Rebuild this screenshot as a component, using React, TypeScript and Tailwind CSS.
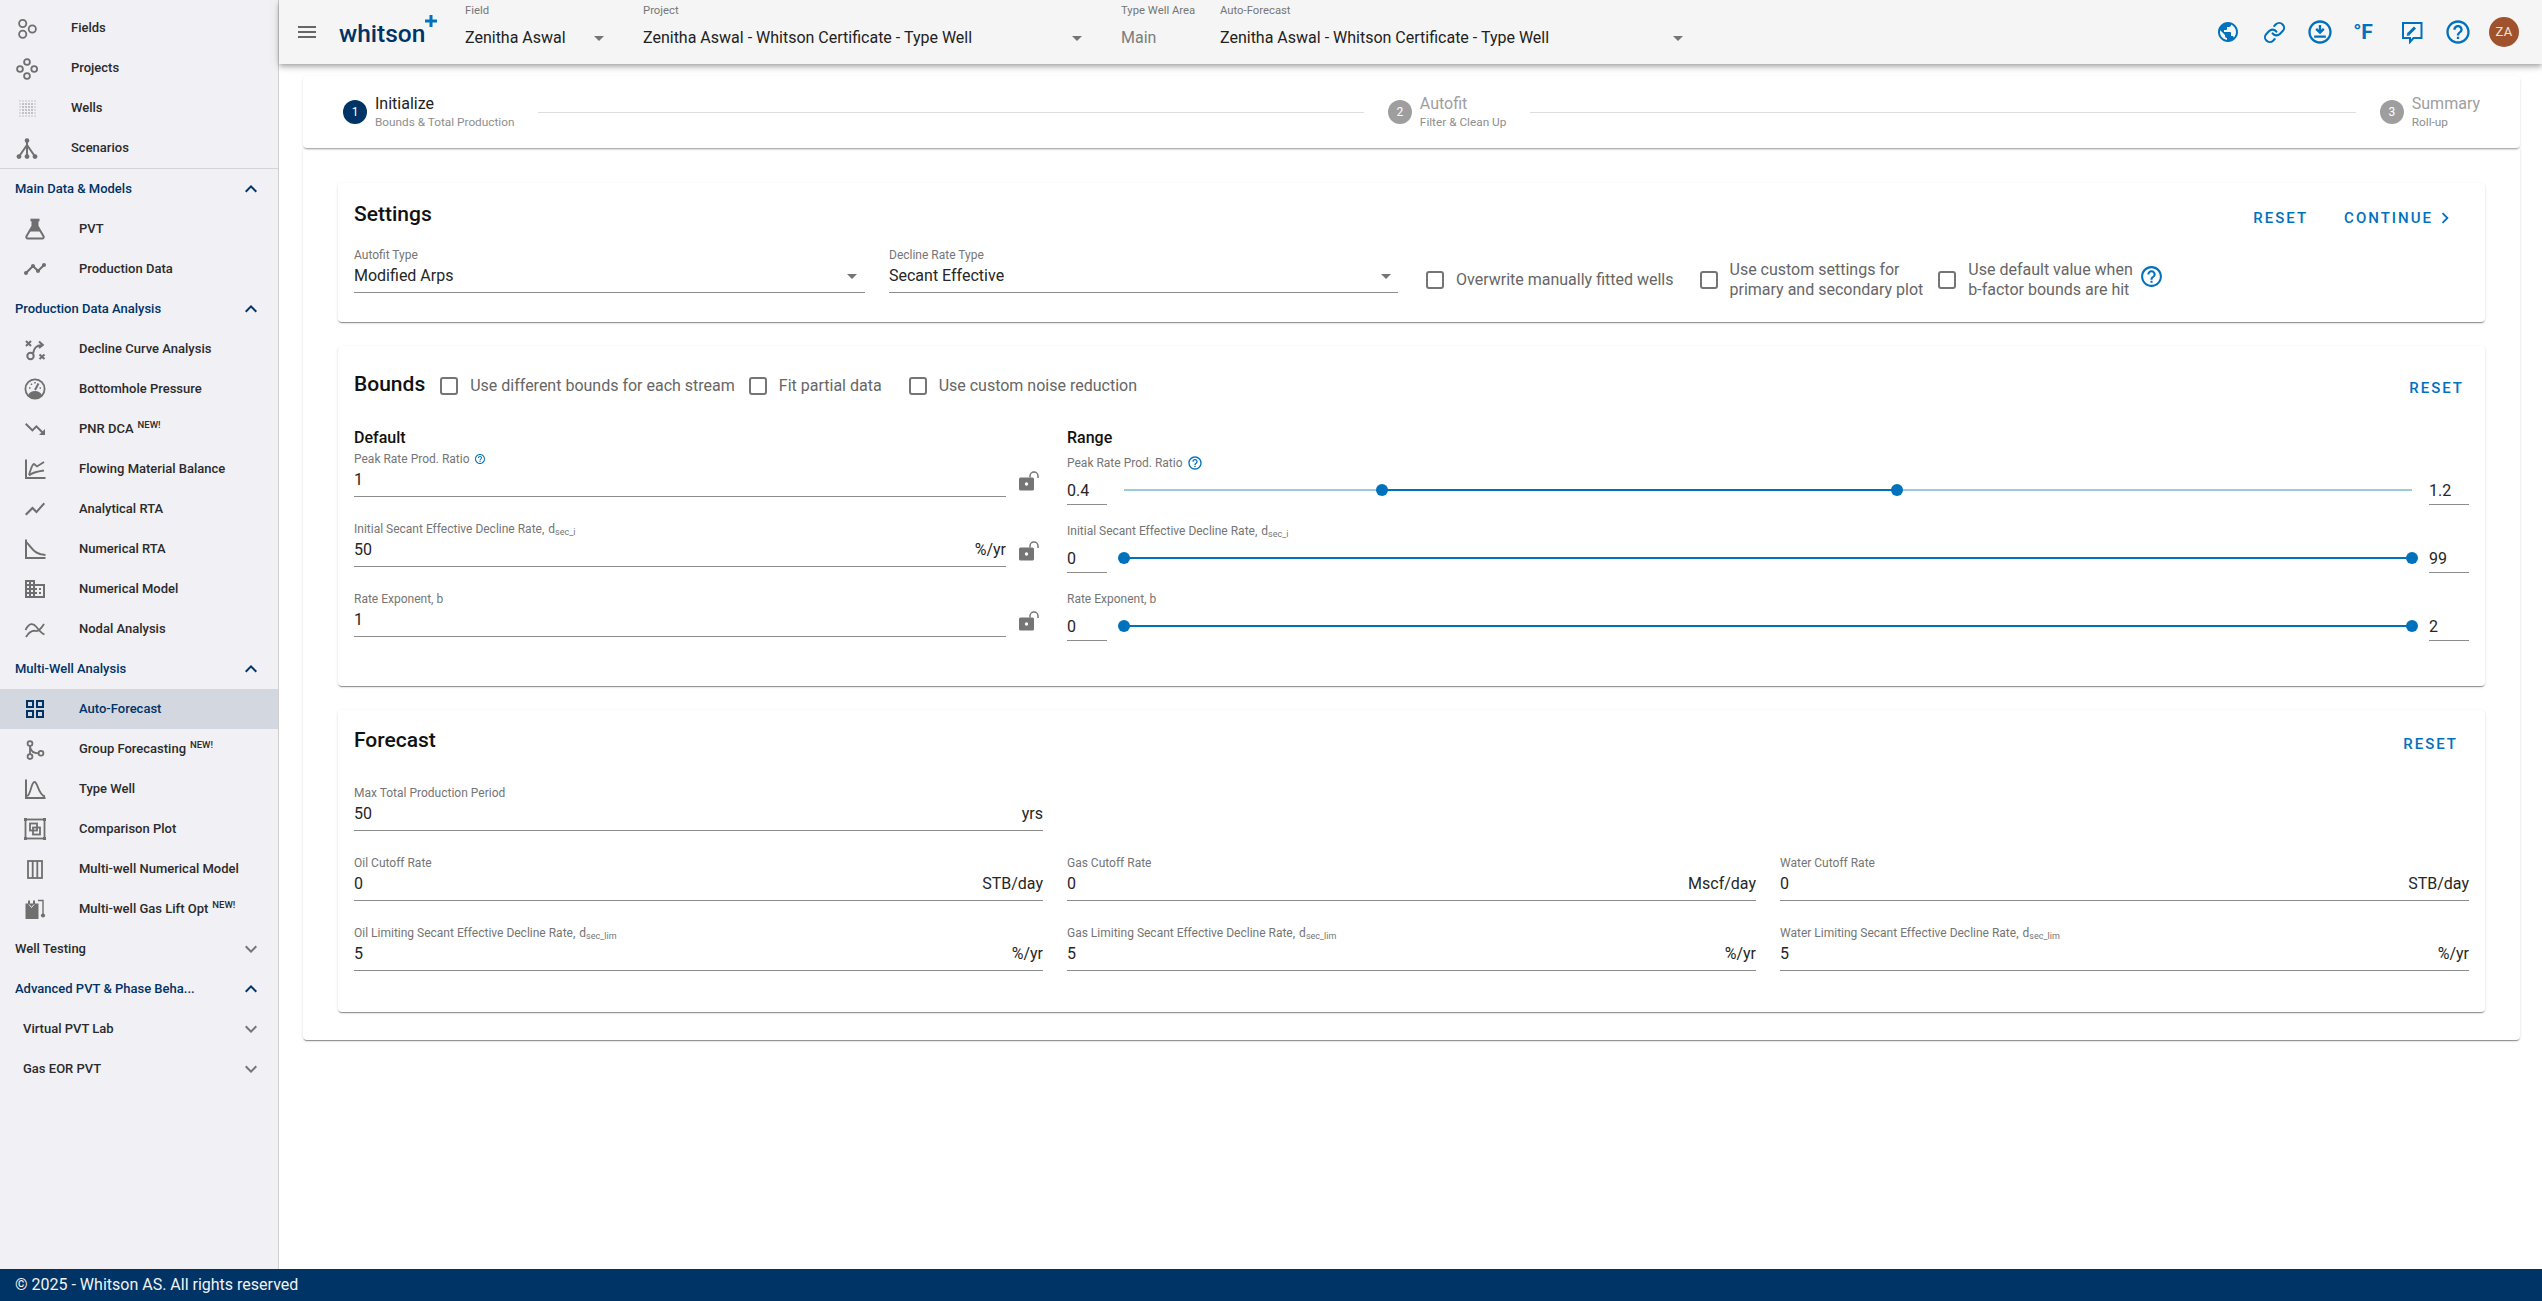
import React from "react";
import { Link as LinkIcon } from "lucide-react";
import {
  MdMenu, MdArrowDropDown, MdExpandLess, MdExpandMore, MdPublic, MdOutlineDownloadForOffline,
  MdHelpOutline, MdTimeline, MdTrendingDown, MdShowChart, MdDomain, MdOutlineGridView, MdChevronRight,
} from "react-icons/md";

const G = "#6f6f6f";
const Svg = ({ children }: { children: React.ReactNode }) => (
  <svg width="24" height="24" viewBox="0 0 24 24" fill="none" stroke={G} strokeWidth="1.8">{children}</svg>
);

const FieldsIcon = () => (
  <Svg><circle cx="7.7" cy="7.5" r="3.6" /><circle cx="7.7" cy="18.3" r="3.6" /><circle cx="17.3" cy="13" r="3.6" /></Svg>
);
const ProjectsIcon = () => (
  <Svg><circle cx="12" cy="6" r="2.9" /><circle cx="5" cy="13" r="2.9" /><circle cx="19.2" cy="13" r="2.9" /><circle cx="12" cy="20" r="2.9" /></Svg>
);
const WellsIcon = () => (
  <svg width="24" height="24" viewBox="0 0 24 24">
    {[0, 1, 2, 3, 4, 5].map((r) =>
      [0, 1, 2, 3, 4, 5].map((c) => (
        <rect key={`${r}-${c}`} x={5 + c * 3 - 0.5} y={5 + r * 3 - 0.5} width="1" height="1" fill="#333"
          opacity={r === 0 || r === 5 || c === 0 || c === 5 ? 0.45 : 0.95} />
      ))
    )}
  </svg>
);
const ScenariosIcon = () => (
  <Svg>
    <path d="M12 5V20M12 9L4 20.5M12 9L20 20.5" strokeWidth="2" />
    <circle cx="12" cy="4.6" r="2.3" fill={G} stroke="none" />
    <circle cx="4" cy="20.6" r="2.4" fill={G} stroke="none" />
    <circle cx="12" cy="20.6" r="2.4" fill={G} stroke="none" />
    <circle cx="20" cy="20.6" r="2.4" fill={G} stroke="none" />
  </Svg>
);
const FlaskIcon = () => (
  <Svg>
    <path d="M7.5 3H16.5" strokeWidth="2.6" />
    <path d="M9.5 3V9L3.5 19.2C2.9 20.4 3.5 21.5 4.8 21.5H19.2C20.5 21.5 21.1 20.4 20.5 19.2L14.5 9V3" strokeWidth="2" />
    <path d="M9.5 4H14.5V9.5L17.3 14.5H6.7L9.5 9.5Z" fill={G} stroke="none" />
  </Svg>
);
const DcaIcon = () => (
  <Svg>
    <path d="M3 4L8 9M8 4L3 9M16.5 17.5L21.5 22M21.5 17.5L16.5 22" strokeWidth="2" />
    <circle cx="7.5" cy="19" r="3.2" strokeWidth="2" />
    <path d="M10 16.5C11 11 13 8.5 19 8M16 4.5L19.8 8L16 11" strokeWidth="2" />
  </Svg>
);
const GaugeIcon = () => (
  <Svg>
    <circle cx="12" cy="12" r="9.6" />
    <path d="M5 18.2A9.3 9.3 0 0 0 19 18.2A8 8 0 0 0 5 18.2Z" fill={G} stroke="none" />
    <path d="M12 13L15.5 6.5" strokeWidth="2" />
    <path d="M6 11H7.5M8 6.8L9 7.8M12 5V6.5M18 11H16.5" strokeWidth="1.6" />
  </Svg>
);
const FmbIcon = () => (
  <Svg>
    <path d="M3 2.5V21H22.5" strokeWidth="2" />
    <path d="M6 18C8 12 9 7 11 7L14 9.5L21 5" strokeWidth="1.8" />
    <path d="M6 18.5C9 15.5 13 14.5 21 13.5" strokeWidth="1.8" />
  </Svg>
);
const RtaIcon = () => (
  <Svg><path d="M3 2.5V21H22.5" strokeWidth="2" /><path d="M3 5C9 10 11 18 22.5 18" strokeWidth="2" /></Svg>
);
const NodalIcon = () => (
  <Svg>
    <path d="M2.5 13C6 6 10 5.5 13.5 10C16 13.5 18 16 21.5 17.5" strokeWidth="1.8" />
    <path d="M3 20C6 15 9 13 13 14C16 14.5 18.5 11 21 7" strokeWidth="1.8" />
  </Svg>
);
const GroupIcon = () => (
  <Svg>
    <circle cx="7" cy="6.5" r="2.4" /><circle cx="7" cy="19.6" r="2.4" /><circle cx="18" cy="16.3" r="2.4" />
    <path d="M7 9V17M7 10C8 15 11 16.3 15.5 16.3" />
  </Svg>
);
const TypeWellIcon = () => (
  <Svg><path d="M3 2.5V21H22.5" strokeWidth="2" /><path d="M4 19C8 18 8 5 11.5 5C15 5 15 18 22 19.5" strokeWidth="1.8" /></Svg>
);
const CompareIcon = () => (
  <Svg>
    <rect x="2.5" y="2.5" width="19" height="19" />
    <rect x="1" y="1" width="3" height="3" fill={G} stroke="none" />
    <rect x="20" y="1" width="3" height="3" fill={G} stroke="none" />
    <rect x="1" y="20" width="3" height="3" fill={G} stroke="none" />
    <rect x="20" y="20" width="3" height="3" fill={G} stroke="none" />
    <rect x="7" y="6.5" width="7" height="7" /><rect x="10" y="10.5" width="7" height="7" />
  </Svg>
);
const ColumnsIcon = () => (
  <Svg><rect x="5" y="4" width="14" height="17" /><path d="M9.7 4V21M14.3 4V21" /></Svg>
);
const GasLiftIcon = () => (
  <svg width="24" height="24" viewBox="0 0 24 24">
    <path d="M2.5 6.5H5V3.5H7V6.5H10V3.5H12V6.5H15.5V22H2.5Z" fill={G} />
    <path d="M15 3.5H20V17" fill="none" stroke={G} strokeWidth="1.4" />
    <circle cx="20" cy="18.5" r="2.1" fill={G} />
    <path d="M6 7.5L8.5 10.5L11 7.5" fill="none" stroke="#f0f0f5" strokeWidth="1" />
  </svg>
);
const FeedbackIcon = () => (
  <svg width="24" height="24" viewBox="0 0 24 24" fill="none" stroke="#0071bc">
    <path d="M3 3H21.5V18H13.5L10 22V18H3Z" strokeWidth="2" />
    <path d="M8.5 14L15 7.5" strokeWidth="3" />
    <path d="M7 15.5L7.6 13L9.8 15Z" fill="#0071bc" strokeWidth="0.6" />
  </svg>
);

type Item =
  | { kind: "link"; label: string; icon: React.ReactNode; indent?: boolean; active?: boolean; isNew?: boolean }
  | { kind: "section"; label: string; open: boolean; sub?: boolean; dark?: boolean };

const icon = (I: React.ComponentType<{ size?: number; color?: string }>, color = G) => <I size={24} color={color} />;

const top: Item[] = [
  { kind: "link", label: "Fields", icon: <FieldsIcon /> },
  { kind: "link", label: "Projects", icon: <ProjectsIcon /> },
  { kind: "link", label: "Wells", icon: <WellsIcon /> },
  { kind: "link", label: "Scenarios", icon: <ScenariosIcon /> },
];
const rest: Item[] = [
  { kind: "section", label: "Main Data & Models", open: true },
  { kind: "link", indent: true, label: "PVT", icon: <FlaskIcon /> },
  { kind: "link", indent: true, label: "Production Data", icon: icon(MdTimeline) },
  { kind: "section", label: "Production Data Analysis", open: true },
  { kind: "link", indent: true, label: "Decline Curve Analysis", icon: <DcaIcon /> },
  { kind: "link", indent: true, label: "Bottomhole Pressure", icon: <GaugeIcon /> },
  { kind: "link", indent: true, label: "PNR DCA", icon: icon(MdTrendingDown), isNew: true },
  { kind: "link", indent: true, label: "Flowing Material Balance", icon: <FmbIcon /> },
  { kind: "link", indent: true, label: "Analytical RTA", icon: icon(MdShowChart) },
  { kind: "link", indent: true, label: "Numerical RTA", icon: <RtaIcon /> },
  { kind: "link", indent: true, label: "Numerical Model", icon: icon(MdDomain) },
  { kind: "link", indent: true, label: "Nodal Analysis", icon: <NodalIcon /> },
  { kind: "section", label: "Multi-Well Analysis", open: true },
  { kind: "link", indent: true, active: true, label: "Auto-Forecast", icon: icon(MdOutlineGridView, "#003366") },
  { kind: "link", indent: true, label: "Group Forecasting", icon: <GroupIcon />, isNew: true },
  { kind: "link", indent: true, label: "Type Well", icon: <TypeWellIcon /> },
  { kind: "link", indent: true, label: "Comparison Plot", icon: <CompareIcon /> },
  { kind: "link", indent: true, label: "Multi-well Numerical Model", icon: <ColumnsIcon /> },
  { kind: "link", indent: true, label: "Multi-well Gas Lift Opt", icon: <GasLiftIcon />, isNew: true },
  { kind: "section", label: "Well Testing", open: false, dark: true },
  { kind: "section", label: "Advanced PVT & Phase Beha...", open: true },
  { kind: "section", label: "Virtual PVT Lab", open: false, sub: true, dark: true },
  { kind: "section", label: "Gas EOR PVT", open: false, sub: true, dark: true },
];

function NavRow({ item }: { item: Item }) {
  if (item.kind === "section") {
    return (
      <div className={`flex h-10 items-center pr-[15px] text-[13px] font-medium ${item.sub ? "pl-[23px]" : "pl-[15px]"} ${item.dark ? "text-[#2b2b2b]" : "text-[#003366]"}`}>
        <span className="flex-1">{item.label}</span>
        {item.open ? <MdExpandLess size={24} color="#003366" /> : <MdExpandMore size={24} color="#757575" />}
      </div>
    );
  }
  return (
    <div className={`flex h-10 items-center gap-8 text-[13px] font-medium ${item.indent ? "pl-[23px]" : "pl-[15px]"} ${item.active ? "bg-[#d3d8e0] text-[#003366]" : "text-[#2b2b2b]"}`}>
      <span className="flex h-6 w-6 items-center justify-center">{item.icon}</span>
      <span>
        {item.label}
        {item.isNew && <span className="relative -top-[5px] ml-1 text-[9.5px]">NEW!</span>}
      </span>
    </div>
  );
}

function Sidebar() {
  return (
    <aside className="w-[279px] shrink-0 border-r border-[#cfcfcf] bg-[#f0f0f5] pt-2">
      <div className="h-[161px] border-b border-[#d4d4d4]">
        {top.map((i, n) => <NavRow key={n} item={i} />)}
      </div>
      {rest.map((i, n) => <NavRow key={n} item={i} />)}
    </aside>
  );
}

function HeaderSelect({ label, value, width, arrow = true, muted, className = "" }: { label: string; value: string; width: string; arrow?: boolean; muted?: boolean; className?: string }) {
  return (
    <div className={`${width} ${className} shrink-0 self-start pt-[3px]`}>
      <div className="h-4 text-[11.3px] leading-4 text-[#757575]">{label}</div>
      <div className={`mt-[3px] flex h-8 items-center justify-between text-[16px] ${muted ? "text-[#7c7c7c]" : "text-[#222]"}`}>
        <span className="whitespace-nowrap">{value}</span>
        {arrow && <MdArrowDropDown size={24} color="#757575" />}
      </div>
    </div>
  );
}

const BLUE = "#0071bc";

function Header() {
  return (
    <header className="relative z-10 flex h-16 shrink-0 items-center bg-[#f5f5f5] pl-4 pr-[23px] shadow-[0_2px_4px_-1px_rgba(0,0,0,0.2),0_4px_5px_0_rgba(0,0,0,0.14),0_1px_10px_0_rgba(0,0,0,0.12)]">
      <MdMenu size={24} color="#666" />
      <div className="relative ml-5 mt-1 w-[126px] text-[24.5px] font-medium leading-none text-[#003366]">
        whitson
        <svg className="absolute left-[86px] -top-[7px]" width="12" height="12" viewBox="0 0 12 12">
          <path d="M6 0V12M0 6H12" stroke={BLUE} strokeWidth="3" />
        </svg>
      </div>
      <HeaderSelect label="Field" value="Zenitha Aswal" width="w-[146px]" />
      <HeaderSelect label="Project" value="Zenitha Aswal - Whitson Certificate - Type Well" width="w-[446px]" className="ml-8" />
      <HeaderSelect label="Type Well Area" value="Main" width="w-[99px]" arrow={false} muted className="ml-8" />
      <HeaderSelect label="Auto-Forecast" value="Zenitha Aswal - Whitson Certificate - Type Well" width="w-[470px]" />
      <div className="ml-auto flex items-center">
        <span className="flex w-[46px] justify-center"><MdPublic size={24} color={BLUE} /></span>
        <span className="flex w-[46px] justify-center"><LinkIcon size={23} color={BLUE} strokeWidth={2.2} /></span>
        <span className="flex w-[46px] justify-center"><MdOutlineDownloadForOffline size={28} color={BLUE} /></span>
        <span className="flex w-[46px] justify-center pr-[6px] text-[21px] font-bold leading-none text-[#0071bc]">°F</span>
        <span className="flex w-[46px] justify-center"><FeedbackIcon /></span>
        <span className="flex w-[46px] justify-center"><MdHelpOutline size={28} color={BLUE} /></span>
        <span className="ml-[8px] flex h-[30px] w-[30px] items-center justify-center rounded-full bg-[#a0522d] text-[13px] tracking-wide text-[#f3e5de]">ZA</span>
      </div>
    </header>
  );
}

function Step({ n, title, sub, active }: { n: number; title: string; sub: string; active?: boolean }) {
  return (
    <div className="flex shrink-0 items-center gap-2">
      <span className={`flex h-6 w-6 items-center justify-center rounded-full text-[12px] text-white ${active ? "bg-[#003366]" : "bg-[#9e9e9e]"}`}>{n}</span>
      <div className="-mt-px">
        <div className={`text-[16px] leading-5 ${active ? "text-[#222]" : "text-[#9e9e9e]"}`}>{title}</div>
        <div className="text-[11.8px] leading-4 text-[#8e8e8e]">{sub}</div>
      </div>
    </div>
  );
}

const CARD = "rounded-[4px] bg-white shadow-[0_2px_1px_-1px_rgba(0,0,0,0.3),0_1px_1px_0_rgba(0,0,0,0.14),0_1px_3px_0_rgba(0,0,0,0.12)]";

function Stepper() {
  return (
    <div className={`${CARD} relative flex h-[72px] items-center px-10 shadow-[0_2px_2px_-1px_rgba(0,0,0,0.35),0_1px_3px_0_rgba(0,0,0,0.1)]`}>
      <Step n={1} title="Initialize" sub="Bounds & Total Production" active />
      <div className="mx-6 h-px flex-1 bg-[#dedede]" />
      <Step n={2} title="Autofit" sub="Filter & Clean Up" />
      <div className="mx-6 h-px flex-1 bg-[#dedede]" />
      <Step n={3} title="Summary" sub="Roll-up" />
    </div>
  );
}

function TextField({ label, value, unit, arrow, className = "" }: { label: React.ReactNode; value: string; unit?: string; arrow?: boolean; className?: string }) {
  return (
    <div className={`h-[46px] border-b border-[#8c8c8c] ${className}`}>
      <div className="flex h-4 items-center text-[12px] leading-4 whitespace-nowrap text-[#757575]">{label}</div>
      <div className="flex h-[26px] items-center justify-between text-[16px] text-[#262626]">
        <span>{value}</span>
        {unit && <span>{unit}</span>}
        {arrow && <MdArrowDropDown size={24} color="#757575" />}
      </div>
    </div>
  );
}

function Check({ label, className = "" }: { label: React.ReactNode; className?: string }) {
  return (
    <div className={`flex shrink-0 items-center gap-3 text-[16px] leading-5 text-[#666] ${className}`}>
      <span className="h-[18px] w-[18px] shrink-0 rounded-[3px] border-2 border-[#757575]" />
      <span className="whitespace-nowrap">{label}</span>
    </div>
  );
}

function TextButton({ children, className = "" }: { children: React.ReactNode; className?: string }) {
  return <span className={`text-[15px] font-medium tracking-[2px] text-[#0071bc] ${className}`}>{children}</span>;
}

function Unlock() {
  return (
    <svg width="20" height="20" viewBox="0 0 20 20" className="shrink-0">
      <rect x="0" y="6.5" width="15" height="13" rx="1.5" fill="#757575" />
      <circle cx="7.5" cy="13" r="1.7" fill="#fff" />
      <path d="M11 6.5V5a4 4 0 0 1 8 0V7" fill="none" stroke="#757575" strokeWidth="1.5" />
    </svg>
  );
}

function Settings() {
  return (
    <section className={`${CARD} h-[139px] px-4 pt-4`}>
      <div className="flex h-8 items-center">
        <h2 className="flex-1 text-[21px] font-medium text-[#111]">Settings</h2>
        <div className="mt-[6px] flex items-center pr-[13px]">
          <TextButton>RESET</TextButton>
          <TextButton className="ml-[36px]">CONTINUE</TextButton>
          <MdChevronRight size={22} color={BLUE} className="ml-[1px]" />
        </div>
      </div>
      <div className="mt-4 flex">
        <TextField label="Autofit Type" value="Modified Arps" arrow className="w-[511px] pr-[1px]" />
        <TextField label="Decline Rate Type" value="Secant Effective" arrow className="ml-6 w-[509px]" />
        <div className="ml-7 flex items-start pt-[13px]">
          <div className="flex items-center">
            <Check label="Overwrite manually fitted wells" />
            <Check label={<>Use custom settings for<br />primary and secondary plot</>} className="ml-[26px]" />
            <Check label={<>Use default value when<br />b-factor bounds are hit</>} className="ml-[15px]" />
            <MdHelpOutline size={25} color={BLUE} className="-mt-2 ml-[6px]" />
          </div>
        </div>
      </div>
    </section>
  );
}

function Slider({ from = 0, to = 100, left, right }: { from?: number; to?: number; left: string; right: string }) {
  return (
    <div className="flex">
      <div className="flex h-[34px] w-10 shrink-0 items-end border-b border-[#8c8c8c] pb-px text-[16px] text-[#262626]">{left}</div>
      <div className="relative mx-[17px] mt-[18px] h-[2px] flex-1 bg-[#9cc8e2]">
        <div className="absolute inset-y-0 bg-[#0071bc]" style={{ left: `${from}%`, right: `${100 - to}%` }} />
        <span className="absolute -top-[5px] -ml-[6px] h-3 w-3 rounded-full bg-[#0071bc]" style={{ left: `${from}%` }} />
        <span className="absolute -top-[5px] -ml-[6px] h-3 w-3 rounded-full bg-[#0071bc]" style={{ left: `${to}%` }} />
      </div>
      <div className="flex h-[34px] w-10 shrink-0 items-end border-b border-[#8c8c8c] pb-px text-[16px] text-[#262626]">{right}</div>
    </div>
  );
}

const DSec = ({ s }: { s: string }) => <span className="ml-1">d<sub className="text-[9px]">{s}</sub></span>;

function RangeRow({ label, children }: { label: React.ReactNode; children: React.ReactNode }) {
  return (
    <div className="h-[50px]">
      <div className="flex h-4 items-center text-[12px] leading-4 text-[#757575]">{label}</div>
      {children}
    </div>
  );
}

function Bounds() {
  return (
    <section className={`${CARD} h-[340px] px-4 pt-4`}>
      <div className="flex h-[46px] items-center">
        <h2 className="text-[21px] font-medium text-[#111]">Bounds</h2>
        <Check label="Use different bounds for each stream" className="ml-[15px] mt-[2px]" />
        <Check label="Fit partial data" className="ml-[14px] mt-[2px]" />
        <Check label="Use custom noise reduction" className="ml-[27px] mt-[2px]" />
        <TextButton className="ml-auto mr-[5px] mt-[6px]">RESET</TextButton>
      </div>
      <div className="mt-[17px] grid grid-cols-3 gap-x-6">
        <div>
          <h3 className="h-6 text-[16px] font-medium leading-[26px] text-[#111]">Default</h3>
          <div className="mt-[2px] flex flex-col gap-6">
            {[
              { l: <>Peak Rate Prod. Ratio<MdHelpOutline size={12} color={BLUE} className="ml-1" /></>, v: "1" },
              { l: <>Initial Secant Effective Decline Rate,<DSec s="sec_i" /></>, v: "50", u: "%/yr" },
              { l: <>Rate Exponent, b</>, v: "1" },
            ].map((f, i) => (
              <div key={i} className="flex items-center">
                <TextField label={f.l} value={f.v} unit={f.u} className="flex-1" />
                <span className="ml-[13px] mr-[4px] mt-[13px]"><Unlock /></span>
              </div>
            ))}
          </div>
        </div>
        <div className="col-span-2">
          <h3 className="h-6 text-[16px] font-medium leading-[26px] text-[#111]">Range</h3>
          <div className="mt-[6px] flex flex-col gap-[18px]">
            <RangeRow label={<>Peak Rate Prod. Ratio<MdHelpOutline size={16} color={BLUE} className="ml-1" /></>}>
              <Slider from={20} to={60} left="0.4" right="1.2" />
            </RangeRow>
            <RangeRow label={<>Initial Secant Effective Decline Rate,<DSec s="sec_i" /></>}>
              <Slider left="0" right="99" />
            </RangeRow>
            <RangeRow label="Rate Exponent, b">
              <Slider left="0" right="2" />
            </RangeRow>
          </div>
        </div>
      </div>
    </section>
  );
}

function Forecast() {
  const lim = <DSec s="sec_lim" />;
  return (
    <section className={`${CARD} h-[302px] px-4 pt-4`}>
      <div className="flex h-[30px] items-center">
        <h2 className="flex-1 text-[21px] font-medium text-[#111]">Forecast</h2>
        <TextButton className="mt-[6px] mr-[11px]">RESET</TextButton>
      </div>
      <div className="mt-[29px] grid grid-cols-3 gap-x-6 gap-y-6">
        <TextField label="Max Total Production Period" value="50" unit="yrs" />
        <div className="col-span-2" />
        <TextField label="Oil Cutoff Rate" value="0" unit="STB/day" />
        <TextField label="Gas Cutoff Rate" value="0" unit="Mscf/day" />
        <TextField label="Water Cutoff Rate" value="0" unit="STB/day" />
        <TextField label={<>Oil Limiting Secant Effective Decline Rate,{lim}</>} value="5" unit="%/yr" />
        <TextField label={<>Gas Limiting Secant Effective Decline Rate,{lim}</>} value="5" unit="%/yr" />
        <TextField label={<>Water Limiting Secant Effective Decline Rate,{lim}</>} value="5" unit="%/yr" />
      </div>
    </section>
  );
}

export default function App() {
  return (
    <div className="flex h-screen w-full flex-col overflow-hidden bg-white [font-family:Roboto,sans-serif]">
      <div className="flex min-h-0 flex-1">
        <Sidebar />
        <div className="flex min-w-0 flex-1 flex-col">
          <Header />
          <main className="min-h-0 flex-1 pl-6 pr-[22px] pt-3">
            <Stepper />
            <div className={`${CARD} flex h-[892px] flex-col gap-6 rounded-t-none px-[35px] pt-[35px]`}>
              <Settings />
              <Bounds />
              <Forecast />
            </div>
          </main>
        </div>
      </div>
      <footer className="flex h-8 shrink-0 items-center bg-[#003366] pl-[15px] text-[16px] text-[#f2f2f2]">© 2025 - Whitson AS. All rights reserved</footer>
    </div>
  );
}
